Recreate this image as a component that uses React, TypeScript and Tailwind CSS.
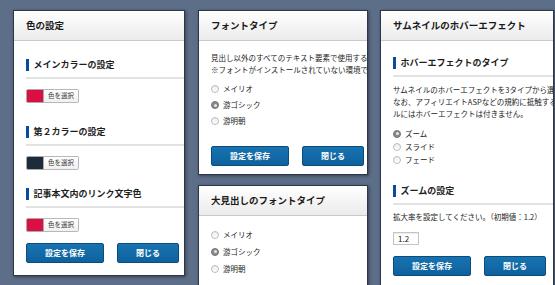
import React from 'react';

const FONT = "font-['Noto_Sans_CJK_JP','Noto_Sans',sans-serif]";

function Panel({ title, className, children }: { title: string; className: string; children: React.ReactNode }) {
  return (
    <div className={`bg-white border border-[#2c3747] shadow-[1px_1px_3px_rgba(20,28,40,0.55)] overflow-hidden ${className}`}>
      <div className="h-[30px] flex items-center pl-[12px] bg-gradient-to-b from-white to-[#ebebeb] border-b border-[#c9c9c9]">
        <span className="text-[9.5px] font-bold text-[#1a1a1a] whitespace-nowrap">{title}</span>
      </div>
      <div className="w-[320px] pl-[12px]">{children}</div>
    </div>
  );
}

function SectionHeading({ children, className = '' }: { children: React.ReactNode; className?: string }) {
  return (
    <div className={`border-b-2 border-[#e2e2e2] pb-[6px] ${className}`}>
      <div className="flex items-center gap-[5px] h-[12px]">
        <span className="w-[2.5px] h-[12px] bg-[#0c4a9e]" />
        <span className="text-[9px] font-bold text-[#1e1e1e] leading-[12px] whitespace-nowrap">{children}</span>
      </div>
    </div>
  );
}

function ColorPicker({ color, className = '' }: { color: string; className?: string }) {
  return (
    <div className={`flex h-[14px] ${className}`}>
      <span className="w-[18px] h-[14px] rounded-l-[2px] border border-[#a9a9a9]" style={{ background: color }} />
      <span className="w-[35px] h-[14px] rounded-r-[2px] border border-l-0 border-[#b8b8b8] bg-gradient-to-b from-white to-[#f0f0f0] flex items-center justify-center text-[6.5px] text-[#333]">
        色を選択
      </span>
    </div>
  );
}

function Radio({ label, checked, rowClass }: { label: string; checked?: boolean; rowClass: string }) {
  return (
    <div className={`flex items-center gap-[4px] ${rowClass}`}>
      {checked ? (
        <span className="w-[8px] h-[8px] rounded-full bg-[#8a8a8a] border border-[#767676] flex items-center justify-center">
          <span className="w-[3px] h-[3px] rounded-full bg-[#e4e4e4]" />
        </span>
      ) : (
        <span className="w-[8px] h-[8px] rounded-full border border-[#bcbcbc] bg-gradient-to-b from-[#ededed] to-white" />
      )}
      <span className="text-[7.5px] text-[#222] whitespace-nowrap">{label}</span>
    </div>
  );
}

function Buttons({ className = '' }: { className?: string }) {
  return (
    <div className={`flex gap-[13px] ${className}`}>
      <button className="h-[20px] w-[78px] rounded-[2px] border border-[#0b4c7a] bg-gradient-to-b from-[#1873b0] to-[#0d629e] text-white text-[8px] font-bold">
        設定を保存
      </button>
      <button className="h-[20px] w-[62px] rounded-[2px] border border-[#0b4c7a] bg-gradient-to-b from-[#1873b0] to-[#0d629e] text-white text-[8px] font-bold">
        閉じる
      </button>
    </div>
  );
}

export default function App() {
  return (
    <div className={`w-[555px] h-[285px] overflow-hidden bg-[#5d6e88] flex items-start pl-[13px] pt-[10px] ${FONT}`}>
      {/* 色の設定 */}
      <Panel title="色の設定" className="w-[172px] shrink-0">
        <SectionHeading className="mt-[18px]">メインカラーの設定</SectionHeading>
        <ColorPicker color="#dc0f45" className="mt-[10px]" />
        <SectionHeading className="mt-[23px]">第２カラーの設定</SectionHeading>
        <ColorPicker color="#1c2b3a" className="mt-[10px]" />
        <SectionHeading className="mt-[18px]">記事本文内のリンク文字色</SectionHeading>
        <ColorPicker color="#dc0f45" className="mt-[10px]" />
        <Buttons className="mt-[11px] mb-[12px]" />
      </Panel>

      {/* フォント */}
      <div className="ml-[13px] w-[170px] shrink-0 flex flex-col gap-[10px]">
        <Panel title="フォントタイプ" className="w-[170px]">
          <div className="mt-[11px] text-[7.5px] leading-[12px] text-[#222] whitespace-nowrap">
            <p>見出し以外のすべてのテキスト要素で使用するフォントを選択してください。</p>
            <p>※フォントがインストールされていない環境では、代替フォントで表示されます。</p>
          </div>
          <div className="mt-[5px]">
            <Radio label="メイリオ" rowClass="h-[16px]" />
            <Radio label="游ゴシック" checked rowClass="h-[16px]" />
            <Radio label="游明朝" rowClass="h-[16px]" />
          </div>
          <Buttons className="mt-[17px] mb-[8px]" />
        </Panel>
        <Panel title="大見出しのフォントタイプ" className="w-[170px] h-[120px]">
          <div className="mt-[10px]">
            <Radio label="メイリオ" rowClass="h-[17px]" />
            <Radio label="游ゴシック" checked rowClass="h-[17px]" />
            <Radio label="游明朝" rowClass="h-[17px]" />
          </div>
        </Panel>
      </div>

      {/* ホバーエフェクト */}
      <Panel title="サムネイルのホバーエフェクト" className="ml-[12px] w-[174px] h-[290px] shrink-0">
        <SectionHeading className="mt-[16px]">ホバーエフェクトのタイプ</SectionHeading>
        <div className="mt-[7px] text-[7.5px] leading-[12px] text-[#222] whitespace-nowrap">
          <p>サムネイルのホバーエフェクトを3タイプから選択できます。</p>
          <p>なお、アフィリエイトASPなどの規約に抵触するため、アフィリエイトリンクのサムネイ</p>
          <p>ルにはホバーエフェクトは付きません。</p>
        </div>
        <div className="mt-[7px]">
          <Radio label="ズーム" checked rowClass="h-[13px]" />
          <Radio label="スライド" rowClass="h-[13px]" />
          <Radio label="フェード" rowClass="h-[13px]" />
        </div>
        <SectionHeading className="mt-[19px]">ズームの設定</SectionHeading>
        <p className="mt-[6px] text-[7.5px] leading-[12px] text-[#222] whitespace-nowrap">
          拡大率を設定してください。（初期値：1.2）
        </p>
        <div className="mt-[9px] w-[26px] h-[13px] border border-[#c4c4c4] shadow-[inset_0_1px_1px_rgba(0,0,0,0.08)] flex items-center pl-[4px] text-[8px] text-[#222]">
          1.2
        </div>
        <Buttons className="mt-[11px]" />
      </Panel>
    </div>
  );
}
